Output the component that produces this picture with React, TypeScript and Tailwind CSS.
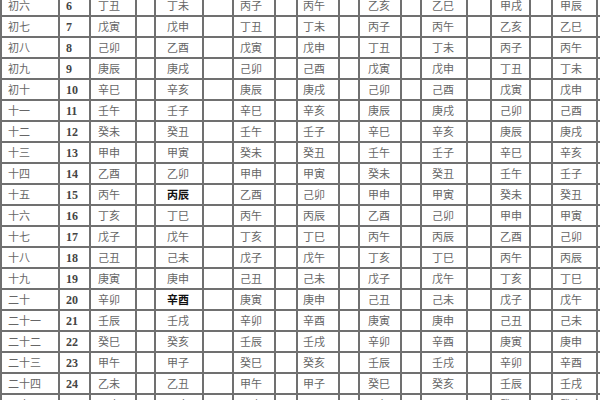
const ROWS: [string, number, string[]][] = [
  ['初六', 6, ['丁丑', '丁未', '丙子', '丙午', '乙亥', '乙巳', '甲戌', '甲辰']],
  ['初七', 7, ['戊寅', '戊申', '丁丑', '丁未', '丙子', '丙午', '乙亥', '乙巳']],
  ['初八', 8, ['己卯', '乙酉', '戊寅', '戊申', '丁丑', '丁未', '丙子', '丙午']],
  ['初九', 9, ['庚辰', '庚戌', '己卯', '己酉', '戊寅', '戊申', '丁丑', '丁未']],
  ['初十', 10, ['辛巳', '辛亥', '庚辰', '庚戌', '己卯', '己酉', '戊寅', '戊申']],
  ['十一', 11, ['壬午', '壬子', '辛巳', '辛亥', '庚辰', '庚戌', '己卯', '己酉']],
  ['十二', 12, ['癸未', '癸丑', '壬午', '壬子', '辛巳', '辛亥', '庚辰', '庚戌']],
  ['十三', 13, ['甲申', '甲寅', '癸未', '癸丑', '壬午', '壬子', '辛巳', '辛亥']],
  ['十四', 14, ['乙酉', '乙卯', '甲申', '甲寅', '癸未', '癸丑', '壬午', '壬子']],
  ['十五', 15, ['丙午', '丙辰', '乙酉', '己卯', '甲申', '甲寅', '癸未', '癸丑']],
  ['十六', 16, ['丁亥', '丁巳', '丙午', '丙辰', '乙酉', '己卯', '甲申', '甲寅']],
  ['十七', 17, ['戊子', '戊午', '丁亥', '丁巳', '丙午', '丙辰', '乙酉', '己卯']],
  ['十八', 18, ['己丑', '己未', '戊子', '戊午', '丁亥', '丁巳', '丙午', '丙辰']],
  ['十九', 19, ['庚寅', '庚申', '己丑', '己未', '戊子', '戊午', '丁亥', '丁巳']],
  ['二十', 20, ['辛卯', '辛酉', '庚寅', '庚申', '己丑', '己未', '戊子', '戊午']],
  ['二十一', 21, ['壬辰', '壬戌', '辛卯', '辛酉', '庚寅', '庚申', '己丑', '己未']],
  ['二十二', 22, ['癸巳', '癸亥', '壬辰', '壬戌', '辛卯', '辛酉', '庚寅', '庚申']],
  ['二十三', 23, ['甲午', '甲子', '癸巳', '癸亥', '壬辰', '壬戌', '辛卯', '辛酉']],
  ['二十四', 24, ['乙未', '乙丑', '甲午', '甲子', '癸巳', '癸亥', '壬辰', '壬戌']],
  ['二十五', 25, ['丙申', '丙寅', '乙未', '乙丑', '甲午', '甲子', '癸巳', '癸亥']],
]

// bold entries: [row day, column index]
const BOLD = new Set(['15-1', '20-1'])

// left padding of each ganzhi column (8 of them)
const PAD = ['pl-[7px]', 'pl-[11px]', 'pl-[6px]', 'pl-[5px]', 'pl-[8px]', 'pl-[10px]', 'pl-[8px]', 'pl-[7px]']

const CJK = "font-['Noto_Sans_CJK_SC','Noto_Sans_CJK_JP',sans-serif]"

export default function App() {
  return (
    <div className="w-[600px] h-[400px] overflow-hidden bg-white">
      <div className="-mt-[6px] w-[640px] grid grid-cols-[56px_29px_44px_17px_46px_28px_40px_20px_40px_18px_40px_18px_44px_22px_37px_20px_43px_20px] auto-rows-[19px] gap-[2px] p-[2px] bg-[#707070]">
        {ROWS.map(([name, num, gz]) => (
          <div key={num} className="contents">
            <div className={`bg-white flex items-center pl-[6px] text-[11px] text-[#666] ${CJK}`}>{name}</div>
            <div className="bg-white flex items-center pl-[6px] text-[12px] font-bold text-[#444] font-['Liberation_Serif',serif]">
              {num}
            </div>
            {gz.map((g, i) => {
              const bold = BOLD.has(`${num}-${i}`)
              return [
                <div
                  key={`g${i}`}
                  className={`bg-white flex items-center ${PAD[i]} text-[11px] ${CJK} ${
                    bold ? 'font-bold text-[#111]' : 'text-[#666]'
                  }`}
                >
                  {g}
                </div>,
                <div key={`e${i}`} className="bg-white" />,
              ]
            })}
          </div>
        ))}
      </div>
    </div>
  )
}
